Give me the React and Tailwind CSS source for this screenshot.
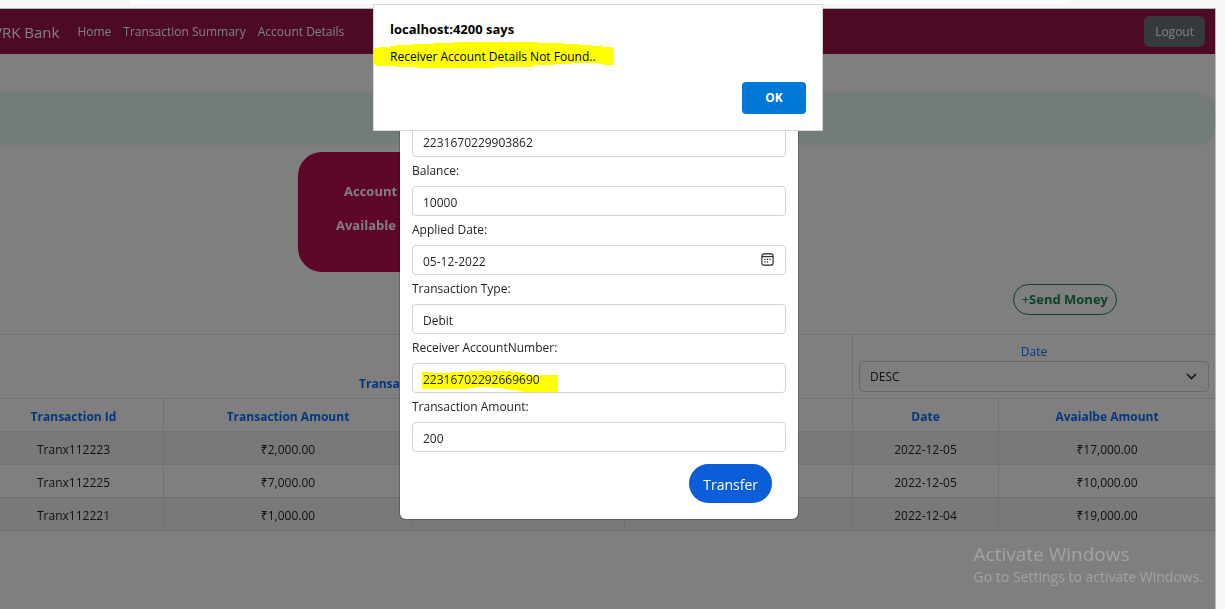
import React from "react";

const transactions = [
  { id: "Tranx112223", amount: "₹2,000.00", date: "2022-12-05", available: "₹17,000.00" },
  { id: "Tranx112225", amount: "₹7,000.00", date: "2022-12-05", available: "₹10,000.00" },
  { id: "Tranx112221", amount: "₹1,000.00", date: "2022-12-04", available: "₹19,000.00" },
];

function CalendarIcon() {
  return (
    <svg width="13" height="13" viewBox="0 0 13 13" fill="none" aria-hidden="true">
      <rect x="0.9" y="0.9" width="11.2" height="11.2" rx="2" stroke="#222" strokeWidth="1.1" />
      <path d="M1 3.6h11" stroke="#222" strokeWidth="1.1" />
      <path d="M5.8 6.4h1.3M8.3 6.4h1.3M3.3 6.4h1.3M3.3 8.9h1.3M5.8 8.9h1.3" stroke="#222" strokeWidth="1.4" />
    </svg>
  );
}

function Field({ id, label, value, children }) {
  return (
    <div>
      <label htmlFor={id} className="block h-[29px] leading-7">
        {label}
      </label>
      <div className="relative">
        <input
          id={id}
          type="text"
          defaultValue={value}
          className="block h-[30px] w-full rounded border border-[#ced4da] bg-white px-2.5 pt-0.5 text-[#212529] outline-none"
        />
        {children}
      </div>
    </div>
  );
}

function NavBar() {
  return (
    <nav className="flex h-[45px] items-center bg-[#9a1448] pr-2.5 text-white">
      <a href="#bank" className="pl-2.5 text-[15px]">VRK Bank</a>
      <div className="ml-[18px] flex grow gap-3">
        <a href="#home">Home</a>
        <a href="#summary">Transaction Summary</a>
        <a href="#account">Account Details</a>
      </div>
      <button type="button" className="h-[31px] rounded-md bg-[#6c757d] px-[11px]">Logout</button>
    </nav>
  );
}

function HeadCell({ children }) {
  return <th className="border border-[#dee2e6] pt-1 font-bold">{children}</th>;
}

function Cell({ children }) {
  return <td className="border border-[#dee2e6] pt-1">{children}</td>;
}

function TransactionTable() {
  return (
    <table className="mt-[19px] w-full table-fixed border-collapse text-center text-[#212529]">
      <colgroup>
        <col className="w-[180px]" />
        <col className="w-[249px]" />
        <col className="w-[212px]" />
        <col className="w-[228px]" />
        <col className="w-[146px]" />
        <col className="w-[217px]" />
      </colgroup>
      <thead className="text-[#0d6efd]">
        <tr className="h-16">
          <th colSpan="4" className="border border-[#dee2e6] pb-1.5 align-bottom font-bold">Transaction History</th>
          <td colSpan="2" className="border border-[#dee2e6] px-1.5">
            <label htmlFor="order" className="block pt-0.5 leading-[18px]">Date</label>
            <div className="relative">
              <select
                id="order"
                defaultValue="DESC"
                className="block h-[31px] w-full appearance-none rounded border border-[#ced4da] bg-white px-2.5 text-[#212529]"
              >
                <option>DESC</option>
                <option>ASC</option>
              </select>
              <svg className="pointer-events-none absolute right-3 top-2.5" width="11" height="11" viewBox="0 0 16 16" fill="none" aria-hidden="true">
                <path d="m2 5 6 6 6-6" stroke="#343a40" strokeWidth="2.4" strokeLinecap="round" strokeLinejoin="round" />
              </svg>
            </div>
          </td>
        </tr>
        <tr className="h-[33px]">
          <HeadCell>Transaction Id</HeadCell>
          <HeadCell>Transaction Amount</HeadCell>
          <HeadCell />
          <HeadCell />
          <HeadCell>Date</HeadCell>
          <HeadCell>Avaialbe Amount</HeadCell>
        </tr>
      </thead>
      <tbody>
        {transactions.map((row) => (
          <tr key={row.id} className="h-[33px] odd:bg-[#f2f2f2]">
            <Cell>{row.id}</Cell>
            <Cell>{row.amount}</Cell>
            <Cell />
            <Cell />
            <Cell>{row.date}</Cell>
            <Cell>{row.available}</Cell>
          </tr>
        ))}
      </tbody>
    </table>
  );
}

function TransferModal() {
  return (
    <div className="absolute inset-0 flex items-start justify-center bg-black/50">
      <form className="mt-7 w-[398px] rounded-md bg-white px-3 pb-4 pt-[90px] text-[#212529] shadow-[0_0_0_1px_rgba(0,0,0,0.2)]">
        <div className="relative">
          <input
            type="text"
            aria-label="Account Number"
            defaultValue="2231670229903862"
            className="block h-[30px] w-full rounded border border-[#ced4da] bg-white px-2.5 text-[#212529] outline-none"
          />
        </div>
        <Field id="balance" label="Balance:" value="10000" />
        <Field id="applied" label="Applied Date:" value="05-12-2022">
          <button type="button" aria-label="Choose date" className="absolute right-3 top-2">
            <CalendarIcon />
          </button>
        </Field>
        <Field id="type" label="Transaction Type:" value="Debit" />
        <Field id="receiver" label="Receiver AccountNumber:" value="22316702292669690">
          <svg className="pointer-events-none absolute left-2.5 top-2 mix-blend-multiply" width="136" height="22" viewBox="0 0 136 22" aria-hidden="true">
            <path d="M0 1H10V2H28V1H46V0H89V1H99V2H104V3H108V4H136V21H100V20H96V19H87V18H81V17H70V16H55V17H45V18H0Z" fill="#ff0" />
          </svg>
        </Field>
        <Field id="amount" label="Transaction Amount:" value="200" />
        <div className="mt-3 flex justify-end pr-3.5">
          <button type="button" className="h-[39px] rounded-full bg-[#0b5ed7] px-3.5 pt-0.5 text-sm text-white">Transfer</button>
        </div>
      </form>
    </div>
  );
}

function AlertDialog() {
  return (
    <div role="alertdialog" aria-labelledby="alert-title" className="w-[450px] border border-[#d7d7d7] bg-white px-4 pb-4 pt-3 text-black">
      <h1 id="alert-title" className="text-[13px] font-bold leading-6">localhost:4200 says</h1>
      <div className="relative leading-8">
        <svg className="absolute -left-4 top-px" width="241" height="27" viewBox="0 0 241 27" aria-hidden="true">
          <path d="M0 6H5V5H13V6H16V4H22V3H38V2H60V1H80V0H164V1H190V2H206V3H218V4H226V3H228V5H237V6H240V23H230V22H224V21H197V22H180V23H160V25H140V25H120V26H44V25H22V24H2V22H0Z" fill="#ff0" />
        </svg>
        <p className="relative">Receiver Account Details Not Found..</p>
      </div>
      <div className="mt-[9px] flex justify-end">
        <button type="button" className="h-8 w-16 rounded-sm bg-[#0078d7] font-bold text-white">OK</button>
      </div>
    </div>
  );
}

export default function App() {
  return (
    <div className="relative flex min-h-screen w-full flex-col overflow-hidden bg-[#f7f7f7] font-['Open_Sans','Noto_Sans',sans-serif] text-xs">
      <div className="h-2 pl-[129px] pr-[155px]">
        <div className="h-1 rounded-b-xl bg-white" />
      </div>
      <div className="relative mr-[9px] flex grow flex-col overflow-hidden border-r border-t border-[#b8b8b8] bg-white">
        <div className="relative -ml-[17px] grow">
          <NavBar />
          <div className="mt-[38px] h-[53px] rounded-2xl bg-[#e6f8f4]" />
          <div className="ml-[315px] mt-[7px] h-[120px] w-[400px] rounded-3xl bg-[#bc0c54] pt-[22px] text-[13px] font-bold leading-[34px] text-white">
            <p className="pl-[46px]">Account</p>
            <p className="pl-[38px]">Available</p>
          </div>
          <div className="mt-3 flex justify-end pr-[98px]">
            <button type="button" className="h-[31px] rounded-full border border-[#198754] px-2 text-[13px] text-[#198754]">
              +<b>Send Money</b>
            </button>
          </div>
          <TransactionTable />
          <TransferModal />
        </div>
      </div>
      <div className="pointer-events-none absolute bottom-[21px] right-[22px] text-[#a3a3a3]">
        <p className="text-[19px] leading-6">Activate Windows</p>
        <p className="text-sm leading-[22px]">Go to Settings to activate Windows.</p>
      </div>
      <div className="pointer-events-none absolute inset-x-0 top-1 flex justify-center pr-[29px]">
        <AlertDialog />
      </div>
    </div>
  );
}
